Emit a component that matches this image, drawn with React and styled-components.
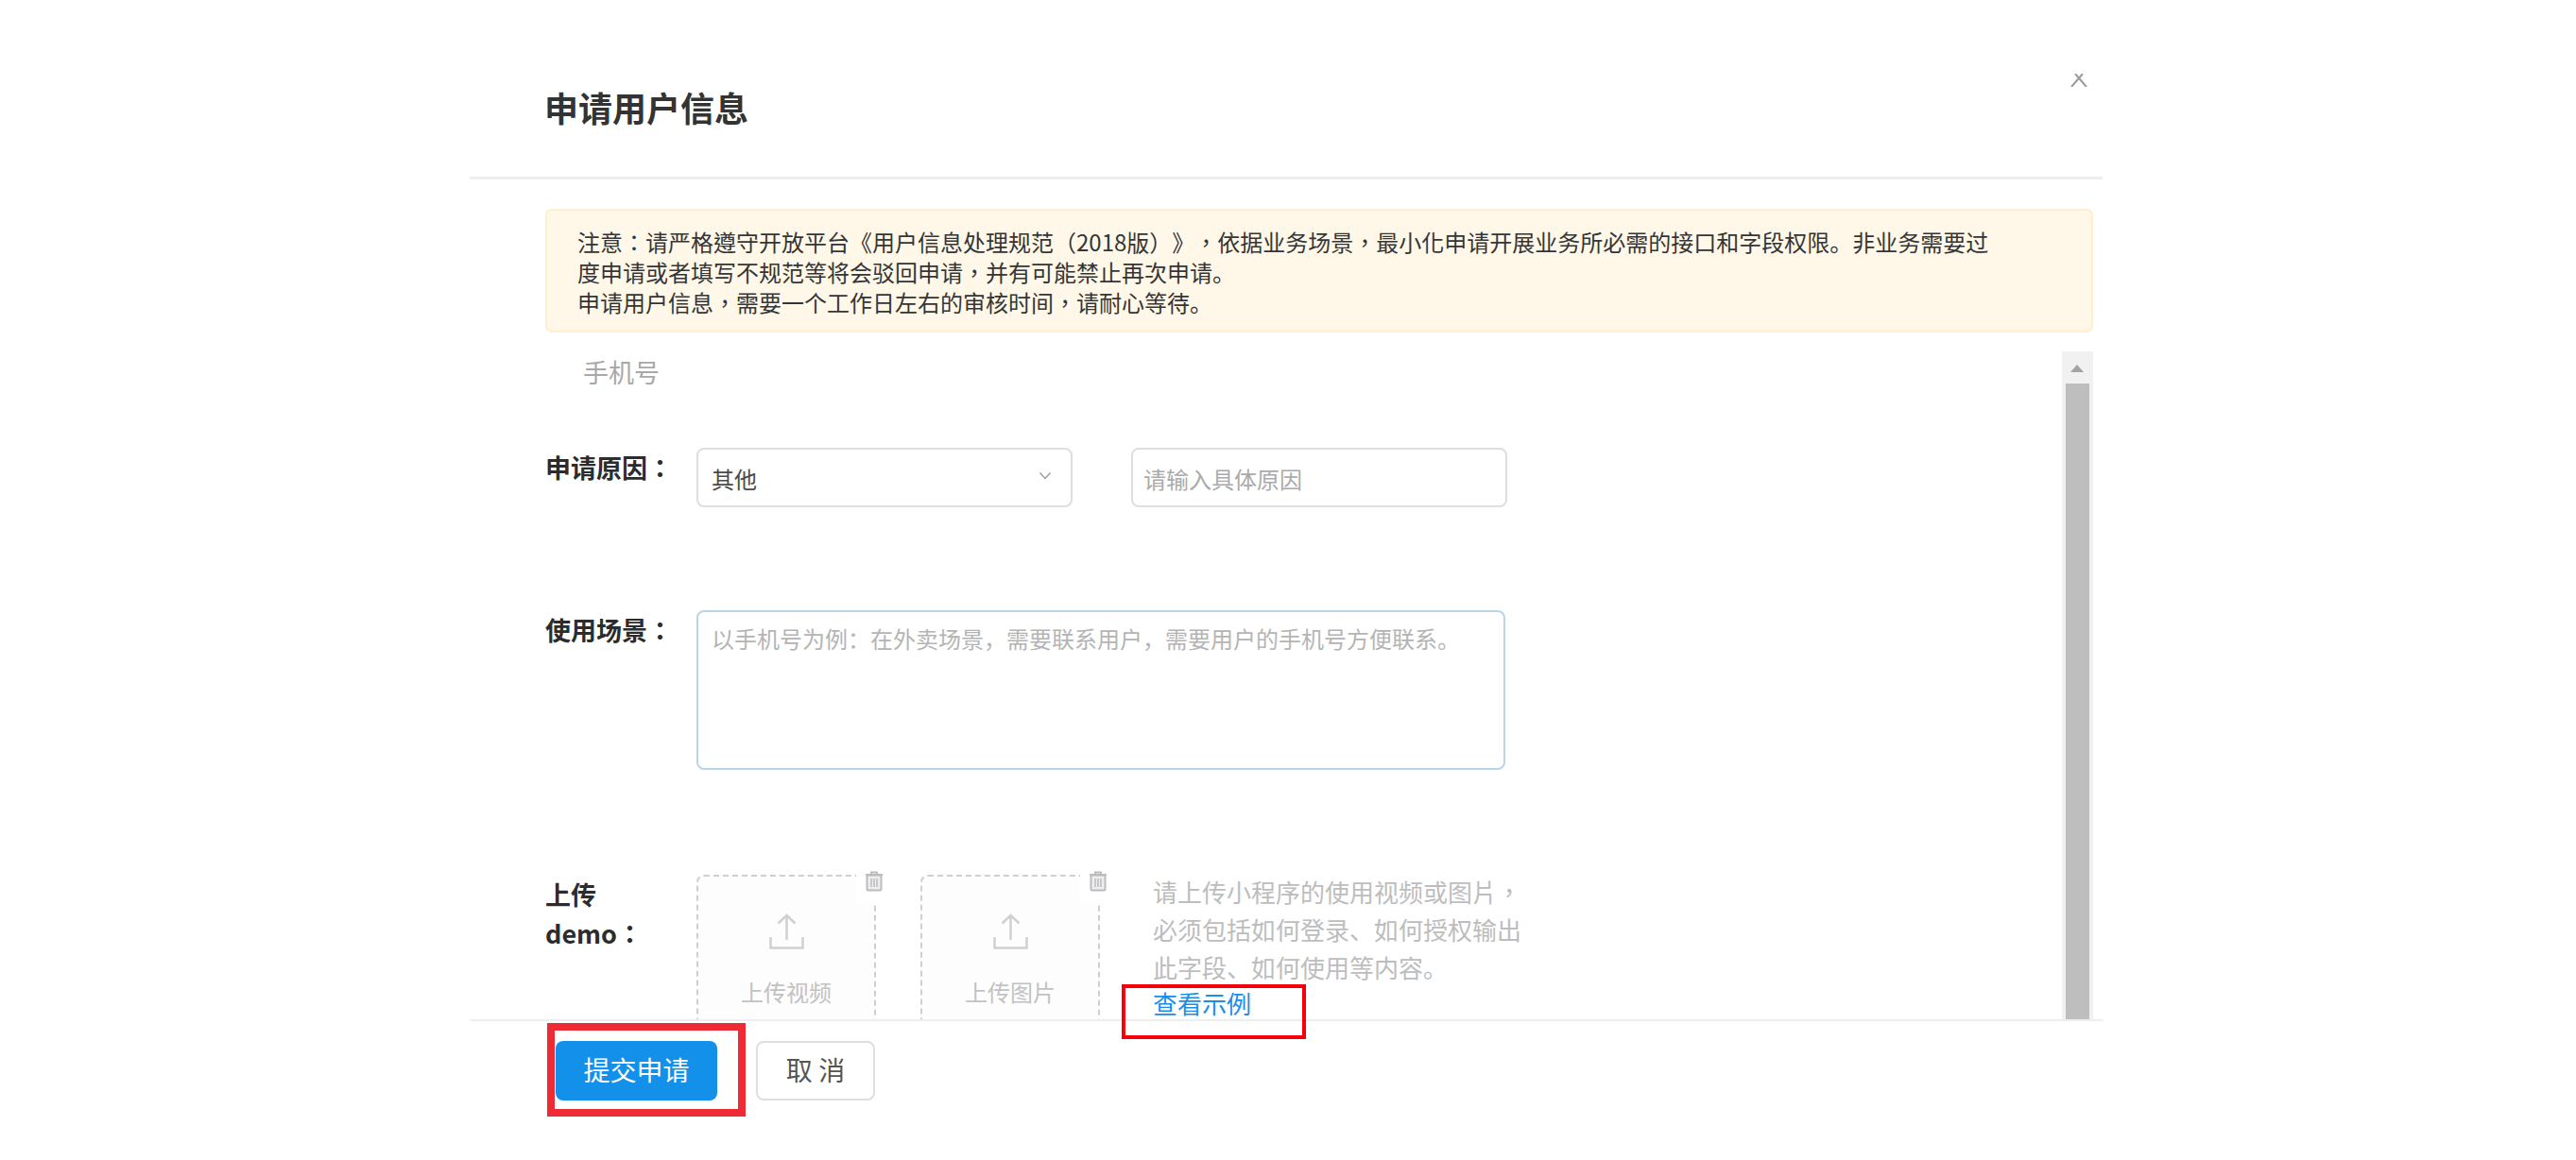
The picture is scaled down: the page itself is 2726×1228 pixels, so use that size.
import React from 'react';
import styled, { createGlobalStyle } from 'styled-components';

const GlobalStyle = createGlobalStyle`
  html, body {
    margin: 0;
    padding: 0;
    background: #fff;
  }
  * {
    box-sizing: border-box;
  }
  body {
    font-family: 'Noto Sans CJK SC', 'Liberation Sans', sans-serif;
    text-spacing-trim: space-all;
  }
`;

const centredPunct = `'Noto Sans CJK TC', 'Noto Sans CJK SC', 'Liberation Sans', sans-serif`;

const Page = styled.div`
  width: 2726px;
  height: 1228px;
  overflow: hidden;
  padding-left: 497px;
  background: #fff;
`;

const Modal = styled.div`
  position: relative;
  width: 1728px;
  height: 1228px;
  background: #fff;
`;

const Header = styled.div`
  height: 190px;
  padding: 95px 0 0 79px;
  border-bottom: 3px solid #eeeeee;
`;

const Title = styled.h2`
  margin: 0;
  font-size: 36px;
  line-height: 36px;
  font-weight: 700;
  color: #333;
`;

const CloseIcon = styled.svg`
  position: absolute;
  left: 1693px;
  top: 78px;
  width: 20px;
  height: 14px;
`;

const Notice = styled.div`
  width: 1638px;
  height: 131px;
  margin: 31px 0 0 80px;
  padding: 17px 90px 0 32px;
  background: #fff8e9;
  border: 2px solid #ffefcc;
  border-radius: 7px;
  font-family: ${centredPunct};
  font-size: 24px;
  line-height: 32px;
  color: #353535;
`;

const Stop = styled.span`
  font-family: 'Noto Sans CJK SC', sans-serif;
`;

const Body = styled.div`
  display: flex;
  height: 707px;
  margin-top: 20px;
  padding-right: 10px;
  overflow: hidden;
`;

const Content = styled.div`
  flex: 1;
  padding-left: 80px;
`;

const ScrollBar = styled.div`
  position: relative;
  flex: none;
  width: 33px;
  padding: 34px 4px 0;
  background: #f1f1f1;
`;

const ScrollArrow = styled.div`
  position: absolute;
  left: 9px;
  top: 14px;
  width: 0;
  height: 0;
  border-left: 7px solid transparent;
  border-right: 7px solid transparent;
  border-bottom: 8px solid #a3a3a3;
`;

const ScrollThumb = styled.div`
  height: 100%;
  background: #bebebe;
`;

const Scope = styled.div`
  margin-top: 4px;
  padding-left: 40px;
  font-size: 27px;
  line-height: 36px;
  color: #a8a8a8;
`;

const FormRow = styled.div`
  display: flex;
  align-items: flex-start;
  margin-top: ${(props) => props.$top}px;
`;

const Label = styled.div`
  flex: none;
  width: 140px;
  margin-right: 20px;
  font-family: ${centredPunct};
  font-size: 27px;
  line-height: 41px;
  font-weight: 700;
  color: #2c2c2c;
`;

const Field = styled.div`
  display: flex;
  align-items: center;
  justify-content: space-between;
  width: 398px;
  height: 63px;
  margin-right: 62px;
  padding: 1px 20px 0 ${(props) => (props.$placeholder ? 11 : 14)}px;
  background: #fff;
  border: 2px solid #dedede;
  border-radius: 8px;
  font-size: 24px;
  color: ${(props) => (props.$placeholder ? '#aaaaaa' : '#4a4a4a')};
`;

const Chevron = styled.svg`
  width: 14px;
  height: 9px;
  margin-bottom: 5px;
`;

const TextArea = styled.div`
  width: 856px;
  height: 169px;
  padding: 10px 14px;
  background: #fff;
  border: 2px solid #b9d5ea;
  border-radius: 8px;
  font-size: 24px;
  line-height: 36px;
  color: #b4b4b4;
`;

const UploadBox = styled.div`
  position: relative;
  flex: none;
  display: flex;
  flex-direction: column;
  align-items: center;
  width: 190px;
  height: 210px;
  margin-right: 47px;
  padding-top: 39px;
  background: #fdfdfd;
  border: 2px dashed #cfcfcf;
  border-radius: 8px;
  font-size: 24px;
  color: #c2c2c2;
`;

const UploadIcon = styled.svg`
  width: 37px;
  height: 38px;
  margin-bottom: 27px;
`;

const TrashWrap = styled.div`
  position: absolute;
  top: -6px;
  right: -10px;
  display: flex;
  justify-content: flex-end;
  width: 29px;
  height: 34px;
  background: #fff;
`;

const TrashIcon = styled.svg`
  width: 20px;
  height: 22px;
`;

const Hint = styled.div`
  width: 396px;
  margin: -2px 0 0 9px;
  font-family: ${centredPunct};
  font-size: 26px;
  line-height: 40px;
  color: #bdbdbd;
`;

const DemoLink = styled.a`
  display: block;
  margin-top: -2px;
  font-size: 26px;
  line-height: 40px;
  color: #1b8ee8;
`;

const Footer = styled.div`
  display: flex;
  align-items: flex-start;
  gap: 41px;
  padding: 21px 0 0 91px;
  border-top: 2px solid #eeeeee;
`;

const Button = styled.button`
  width: ${(props) => (props.$primary ? 171 : 126)}px;
  height: 63px;
  padding: 0 0 3px;
  background: ${(props) => (props.$primary ? '#1390ea' : '#fff')};
  border: ${(props) => (props.$primary ? 'none' : '2px solid #dedede')};
  border-radius: 8px;
  font-family: inherit;
  font-size: 28px;
  color: ${(props) => (props.$primary ? '#fff' : '#555')};
`;

const Highlight = styled.div`
  position: absolute;
  left: ${(props) => props.$left}px;
  top: ${(props) => props.$top}px;
  width: ${(props) => props.$width}px;
  height: ${(props) => props.$height}px;
  border: ${(props) => props.$weight}px solid ${(props) => props.$color};
  pointer-events: none;
`;

function Upload({ label }) {
  return (
    <UploadBox>
      <TrashWrap>
        <TrashIcon viewBox="0 0 20 22" fill="none" stroke="#bcbcbc" strokeWidth="2">
          <path d="M1 4h18M7 3.5V1.5h6v2" />
          <rect x="2.5" y="4.5" width="15" height="16" rx="1" fill="#eceef2" />
          <path d="M7 8v9M10 8v9M13 8v9" strokeWidth="1.5" />
        </TrashIcon>
      </TrashWrap>
      <UploadIcon viewBox="0 0 37 38" fill="none" stroke="#d0d0d0" strokeWidth="2.5">
        <path d="M18.5 28V2M9.5 10.5L18.5 2l9 8.5" />
        <path d="M1.5 25v11.5h34V25" />
      </UploadIcon>
      {label}
    </UploadBox>
  );
}

export default function App() {
  return (
    <Page>
      <GlobalStyle />
      <Modal>
        <Header>
          <Title>申请用户信息</Title>
        </Header>
        <CloseIcon viewBox="0 0 20 14" fill="none" stroke="#9a9a9a" strokeWidth="2">
          <path d="M6 0L18 14M14 0L2 14" />
        </CloseIcon>

        <Notice>
          注意：请严格遵守开放平台《用户信息处理规范（2018版）》，依据业务场景，最小化申请开展业务所必需的接口和字段权限<Stop>。</Stop>非业务需要过度申请或者填写不规范等将会驳回申请，并有可能禁止再次申请<Stop>。</Stop>
          <br />
          申请用户信息，需要一个工作日左右的审核时间，请耐心等待<Stop>。</Stop>
        </Notice>

        <Body>
          <Content>
            <Scope>手机号</Scope>

            <FormRow $top={62}>
              <Label>申请原因：</Label>
              <Field>
                其他
                <Chevron viewBox="0 0 14 9" fill="none" stroke="#9c9c9c" strokeWidth="1.5">
                  <path d="M1.5 1.5L7 7.5l5.5-6" />
                </Chevron>
              </Field>
              <Field $placeholder>请输入具体原因</Field>
            </FormRow>

            <FormRow $top={109}>
              <Label>使用场景：</Label>
              <TextArea>以手机号为例：在外卖场景，需要联系用户，需要用户的手机号方便联系。</TextArea>
            </FormRow>

            <FormRow $top={111}>
              <Label>上传 demo：</Label>
              <Upload label="上传视频" />
              <Upload label="上传图片" />
              <Hint>
                请上传小程序的使用视频或图片，必须包括如何登录<Stop>、</Stop>如何授权输出此字段<Stop>、</Stop>如何使用等内容<Stop>。</Stop>
                <DemoLink>查看示例</DemoLink>
              </Hint>
            </FormRow>
          </Content>
          <ScrollBar>
            <ScrollArrow />
            <ScrollThumb />
          </ScrollBar>
        </Body>

        <Footer>
          <Button $primary>提交申请</Button>
          <Button>取 消</Button>
        </Footer>

        <Highlight $left={690} $top={1042} $width={195} $height={58} $weight={4} $color="#f5000a" />
        <Highlight $left={82} $top={1083} $width={210} $height={99} $weight={8} $color="#ee2a35" />
      </Modal>
    </Page>
  );
}
